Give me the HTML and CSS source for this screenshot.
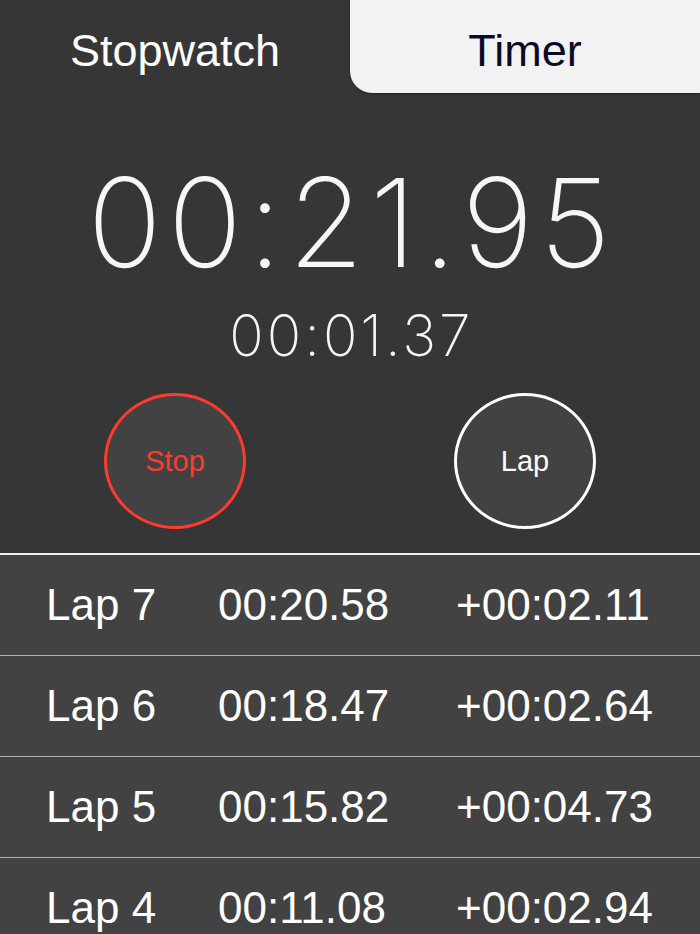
FILE: index.html
```html
<!DOCTYPE html>
<html lang="en">
<head>
    <meta charset="UTF-8">
    <meta name="viewport" content="width=device-width, initial-scale=1.0">
    <title>Stopwatch</title>
    <link rel="stylesheet" href="styles.css">
</head>
<body>

    <!-- Tabs -->
    <div class="tabs">
        <div class="tab active">Stopwatch</div>
        <div class="tab timer">Timer</div>
    </div>

    <!-- Clock -->
    <div class="display">
        <div class="main-time">00:21.95</div>
        <div class="lap-time">00:01.37</div>
    </div>

    <!-- Buttons -->
    <div class="controls">
        <button class="circle-btn stop">Stop</button>
        <button class="circle-btn lap">Lap</button>
    </div>

    <!-- Laps -->
    <div class="lap-list">
        <div class="lap-row"><span>Lap 7</span><span>00:20.58</span><span>+00:02.11</span></div>
        <div class="lap-row"><span>Lap 6</span><span>00:18.47</span><span>+00:02.64</span></div>
        <div class="lap-row"><span>Lap 5</span><span>00:15.82</span><span>+00:04.73</span></div>
        <div class="lap-row"><span>Lap 4</span><span>00:11.08</span><span>+00:02.94</span></div>
    </div>

</body>
</html>
```

FILE: styles.css
```css
* {
    margin: 0;
    padding: 0;
    box-sizing: border-box;
}

body {
    font-family: "Liberation Sans", Arial, sans-serif;
    background-color: #363636;
    color: white;
    width: 700px;
    height: 934px;
    overflow: hidden;
}

/* Tabs */
.tabs {
    display: flex;
    height: 93px;
}

.tab {
    flex: 1;
    display: flex;
    justify-content: center;
    align-items: center;
    padding-top: 8px;
    font-size: 45px;
}

.tab.active {
    color: white;
}

.tab.timer {
    background-color: #f2f2f2;
    color: #0b0b28;
    border-bottom-left-radius: 22px;
    box-shadow: 0 1px 2px rgba(0,0,0,0.4);
}

/* Clock */
.display {
    text-align: center;
    padding-top: 66px;
}

.main-time {
    font-family: Inter, "Liberation Sans", sans-serif;
    font-weight: 200;
    font-size: 123px;
    line-height: 127px;
    letter-spacing: 6px;
    padding-left: 4px;
    color: #f6f6f8;
}

.lap-time {
    font-family: Inter, "Liberation Sans", sans-serif;
    font-weight: 200;
    font-size: 57px;
    line-height: 70px;
    letter-spacing: 3px;
    padding-left: 3px;
    margin-top: 15px;
    color: #f6f6f8;
}

/* Buttons */
.controls {
    display: flex;
    justify-content: space-between;
    padding: 22px 104px 24px 104px;
}

.circle-btn {
    width: 142px;
    height: 136px;
    border-radius: 50%;
    background-color: #424242;
    border: 3px solid white;
    font-family: "Liberation Sans", Arial, sans-serif;
    font-size: 29px;
    color: white;
}

.circle-btn.stop {
    border-color: #ff3b30;
    color: #ff3b30;
}

/* Lap list */
.lap-list {
    border-top: 2px solid #f0f0f0;
}

.lap-row {
    display: grid;
    grid-template-columns: 172px 238px 1fr;
    align-items: center;
    height: 101px;
    padding-left: 46px;
    background-color: #424242;
    border-bottom: 1px solid #b0b0b0;
    font-size: 44px;
}
```
